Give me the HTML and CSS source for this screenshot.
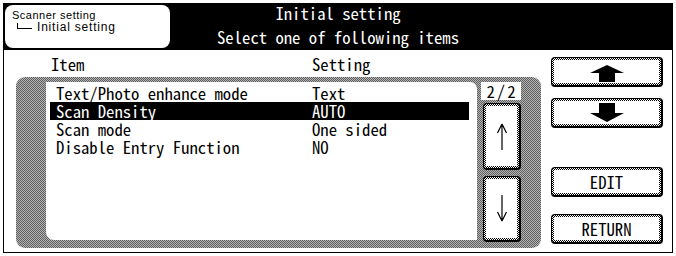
FILE: index.html
```html
<!DOCTYPE html>
<html lang="en">
<head>
<meta charset="utf-8">
<title>Initial setting</title>
<link rel="stylesheet" href="styles.css">
</head>
<body>
<div class="screen">
  <header class="top">
    <div class="crumb">
      <div class="crumb-1">Scanner setting</div>
      <div class="crumb-2"><span class="tree"></span>Initial setting</div>
    </div>
    <div class="title">
      <div>Initial setting</div>
      <div>Select one of following items</div>
    </div>
    <div></div>
  </header>
  <main class="body">
    <section class="left">
      <div class="cols"><span class="col-item">Item</span><span>Setting</span></div>
      <div class="panel">
        <div class="list">
          <div class="row"><span class="name">Text/Photo enhance mode</span><span>Text</span></div>
          <div class="row sel"><span class="name">Scan Density</span><span>AUTO</span></div>
          <div class="row"><span class="name">Scan mode</span><span>One sided</span></div>
          <div class="row"><span class="name">Disable Entry Function</span><span>NO</span></div>
        </div>
        <div class="scroll">
          <div class="page">2/2</div>
          <div class="btn sbtn sbtn-up"><div class="face">
            <svg width="12" height="27" viewBox="0 0 12 27"><path d="M6 1V27M6 1L1.5 10M6 1L10.5 10" fill="none" stroke="#000" stroke-width="1.2"/></svg>
          </div></div>
          <div class="btn sbtn sbtn-down"><div class="face">
            <svg width="12" height="27" viewBox="0 0 12 27"><path d="M6 0V26M6 26L1.5 17M6 26L10.5 17" fill="none" stroke="#000" stroke-width="1.2"/></svg>
          </div></div>
        </div>
      </div>
    </section>
    <aside class="side">
      <div class="btn side-btn b-up"><div class="face">
        <svg class="big-arrow up" width="34" height="17" viewBox="0 0 34 17"><polygon points="17,0 34,8 25,8 25,17 9,17 9,8 0,8" fill="#000"/></svg>
      </div></div>
      <div class="btn side-btn b-down"><div class="face">
        <svg class="big-arrow" width="34" height="19" viewBox="0 0 34 19"><polygon points="9,0 25,0 25,10 34,10 17,19 0,10 9,10" fill="#000"/></svg>
      </div></div>
      <div class="btn side-btn b-edit"><div class="face">EDIT</div></div>
      <div class="btn side-btn b-ret"><div class="face">RETURN</div></div>
    </aside>
  </main>
</div>
</body>
</html>
```

FILE: styles.css
```css
body {
  margin: 0;
  background: #fff;
}

.screen {
  margin: 3px 0 0 3px;
  width: 670px;
  font-family: "Noto Sans Mono CJK JP", "Liberation Mono", monospace;
  font-size: 16.7px;
  font-weight: 300;
  color: #000;
}

.top {
  background: #000;
  color: #fff;
  height: 47px;
  box-sizing: border-box;
  padding: 2px;
  display: grid;
  grid-template-columns: 1fr auto 1fr;
}

.crumb {
  background: #fff;
  color: #000;
  width: 165px;
  height: 43px;
  box-sizing: border-box;
  border-radius: 8px;
  padding: 4px 0 0 7px;
  font-family: "Liberation Sans", Arial, sans-serif;
  font-weight: 400;
}

.crumb-1 {
  font-size: 11px;
  line-height: 12px;
  letter-spacing: 0.5px;
}

.crumb-2 {
  font-size: 12px;
  line-height: 12px;
  letter-spacing: 0.8px;
}

.tree {
  display: inline-block;
  width: 14px;
  height: 5px;
  border-left: 1px solid #000;
  border-bottom: 1px solid #000;
  margin: 0 5px 0 5px;
  vertical-align: 2px;
}

.title {
  display: flex;
  flex-direction: column;
  align-items: center;
  gap: 8px;
  line-height: 16px;
  white-space: pre;
}

.body {
  display: flex;
  height: 203px;
  box-sizing: border-box;
  border: 1px solid #000;
  border-top: 0;
}

.left {
  padding-left: 12px;
}

.cols {
  display: flex;
  height: 27px;
  box-sizing: border-box;
  padding: 4px 0 0 35px;
  line-height: 20px;
}

.col-item {
  width: 261px;
}

.panel {
  display: flex;
  align-items: flex-start;
  width: 525px;
  height: 171px;
  box-sizing: border-box;
  padding: 5px 20px 8px 30px;
  border-radius: 9px;
  background: repeating-conic-gradient(#5f5f5f 0 25%, #b4b4b4 0 50%) 0 0 / 2px 2px;
}

.list {
  width: 431px;
  height: 158px;
  box-sizing: border-box;
  padding-top: 2px;
  background: #fff;
  border-radius: 0 7px 0 8px;
}

.row {
  display: flex;
  height: 18px;
  line-height: 18px;
  margin: 0 8px 0 4px;
  padding-left: 6px;
  white-space: pre;
}

.row.sel {
  background: #000;
  color: #fff;
}

.name {
  width: 256px;
}

.scroll {
  display: flex;
  flex-direction: column;
  width: 40px;
  margin-left: 4px;
}

.page {
  height: 18px;
  line-height: 18px;
  background: #fff;
  text-align: center;
  letter-spacing: 2px;
  padding-left: 2px;
}

.btn {
  box-sizing: border-box;
  border-style: solid;
  border-color: #000;
  border-width: 1px 2px 2px 1px;
  border-radius: 4px;
  padding: 2px;
  background: repeating-conic-gradient(#000 0 25%, #fff 0 50%) 0 0 / 2px 2px;
}

.face {
  height: 100%;
  background: #fff;
  display: flex;
  align-items: center;
  justify-content: center;
}

.sbtn {
  width: 38px;
  margin-left: 2px;
}

.sbtn-up {
  margin-top: 3px;
  height: 67px;
}

.sbtn-down {
  margin-top: 6px;
  height: 66px;
}

.side {
  display: flex;
  flex-direction: column;
  width: 112px;
  margin-left: 10px;
  padding-top: 7px;
}

.side-btn {
  height: 30px;
}

.b-down {
  margin-top: 11px;
}

.b-edit {
  margin-top: 39px;
}

.b-ret {
  margin-top: 17px;
}

.big-arrow.up {
  margin-top: 3px;
}
```
